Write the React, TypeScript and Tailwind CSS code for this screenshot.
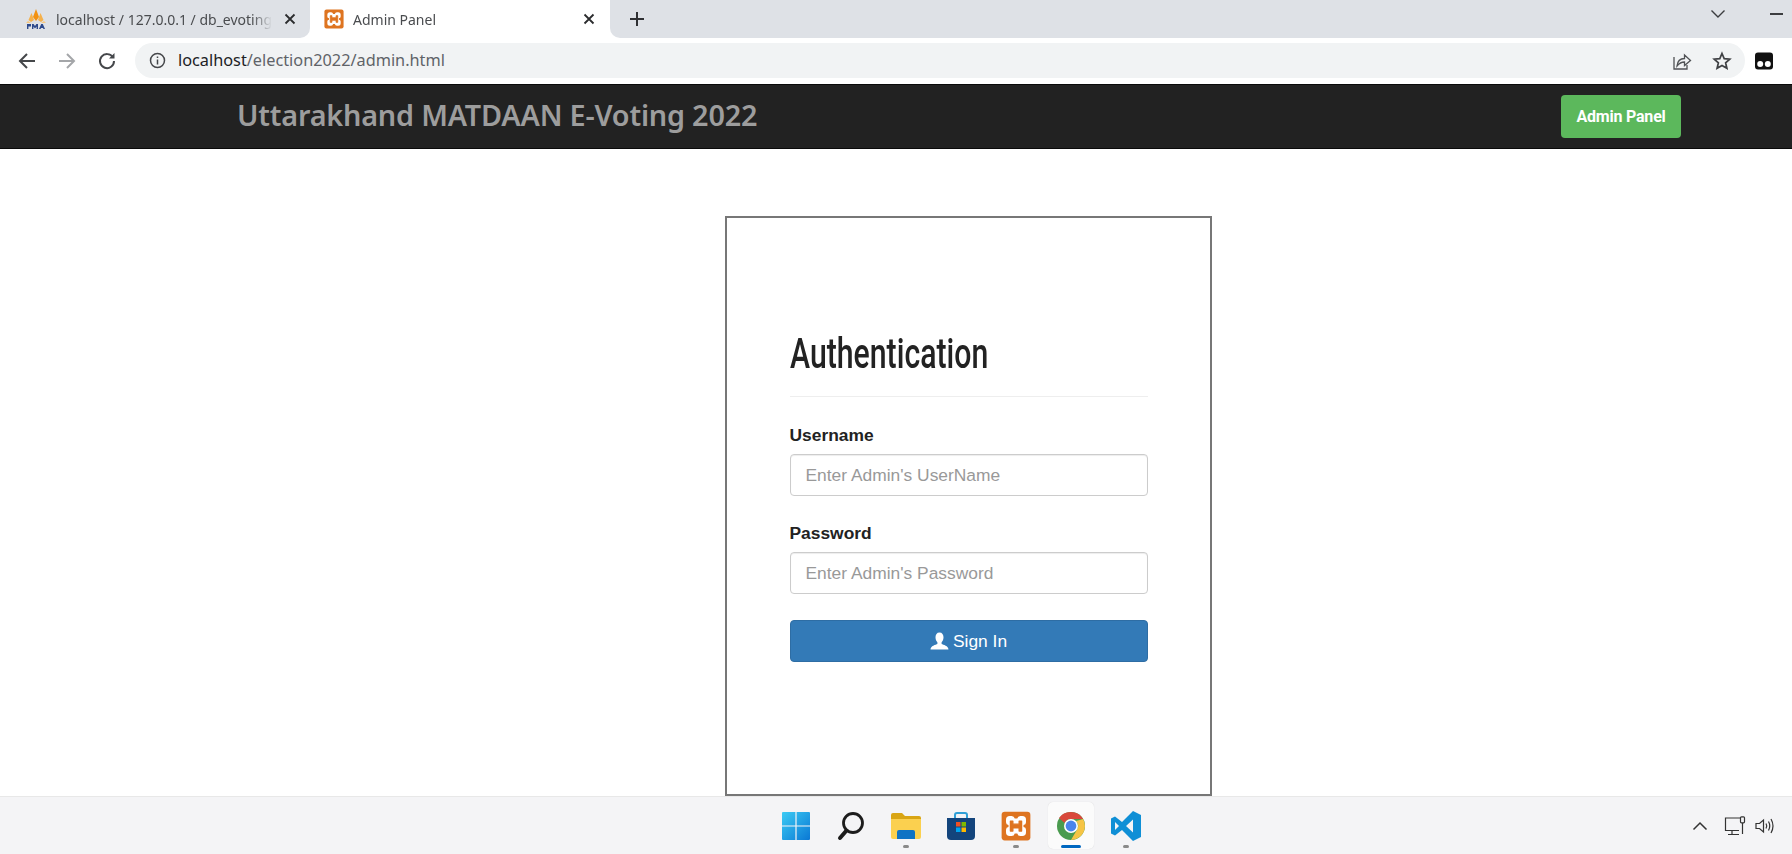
import React from "react";

const ui = "font-['Noto_Sans','Open_Sans',sans-serif]";

function Xampp({ size = 20 }: { size?: number }) {
  return (
    <svg width={size} height={size} viewBox="0 0 24 24">
      <rect x="0.5" y="0.5" width="23" height="23" rx="2.5" fill="#de7420" />
      <path d="M4 7 Q4 4 7 4 H8.5 Q10.5 4 11 6 H13 Q13.5 4 15.5 4 H17 Q20 4 20 7 V9 Q20 11 18 11.2 V12.8 Q20 13 20 15 V17 Q20 20 17 20 H15.5 Q13.5 20 13 18 H11 Q10.5 20 8.5 20 H7 Q4 20 4 17 V15 Q4 13 6 12.8 V11.2 Q4 11 4 9 Z" fill="#fff" />
      <path d="M7.5 8 H9.5 V10.5 H14.5 V8 H16.5 V16 H14.5 V13.5 H9.5 V16 H7.5 Z" fill="#de7420" stroke="#de7420" strokeWidth="1" strokeLinejoin="round" />
    </svg>
  );
}

function Pma() {
  return (
    <svg width="22" height="22" viewBox="0 0 22 22">
      <path d="M11 1 L14 9 L11 13 L8 9 Z" fill="#f29111" />
      <path d="M6.5 5 L9 12 L6 14 L3.5 12 Z" fill="#f5b14c" />
      <path d="M15.5 5 L18.5 12 L16 14 L13 12 Z" fill="#f5b14c" />
      <path d="M3 13 L1 15 H6 Z M19 13 L21 15 H16 Z" fill="#f7c77e" />
      <path d="M2 16 H6 V18.6 H3.4 V21 H2 Z M7 16 H8.6 L10 18 L11.4 16 H13 V21 H11.6 V18.6 L10 20.6 L8.4 18.6 V21 H7 Z M14 21 L16.2 16 H17.8 L20 21 H18.4 L18 20 H16 L15.6 21 Z" fill="#2e4a8c" />
    </svg>
  );
}

function Tab({ active, icon, title, className }: { active?: boolean; icon: React.ReactNode; title: string; className: string }) {
  return (
    <div className={`flex h-[38px] items-center ${className}`}>
      {icon}
      <span className="ml-[9px] min-w-0 flex-1 overflow-hidden whitespace-nowrap text-[14px] text-[#4a4c4f] [mask-image:linear-gradient(to_left,transparent,black_20px)]">{title}</span>
      <svg width="12" height="12" viewBox="0 0 12 12" className={`shrink-0 ${active ? "mx-[15px]" : "ml-[12px] mr-[14px]"}`} stroke="#2b2c2e" strokeWidth="1.8">
        <path d="M1.5 1.5 L10.5 10.5 M10.5 1.5 L1.5 10.5" />
      </svg>
    </div>
  );
}

function TabStrip() {
  return (
    <div className={`flex h-[38px] bg-white ${ui}`}>
      <Tab icon={<Pma />} title="localhost / 127.0.0.1 / db_evoting" className="w-[310px] rounded-br-[10px] bg-[#dee1e6] pl-[25px]" />
      <Tab active icon={<Xampp />} title="Admin Panel" className="w-[300px] rounded-t-[10px] bg-white pl-[14px]" />
      <div className="flex flex-1 items-center rounded-bl-[10px] bg-[#dee1e6] pl-[19px]">
        <svg width="16" height="16" viewBox="0 0 16 16" stroke="#2f3033" strokeWidth="2">
          <path d="M8 1 V15 M1 8 H15" />
        </svg>
        <svg width="16" height="10" viewBox="0 0 16 10" fill="none" stroke="#3c3d40" strokeWidth="1.4" className="mb-[10px] ml-auto">
          <path d="M1.5 1.5 L8 8 L14.5 1.5" />
        </svg>
        <div className="mb-[10px] ml-[44px] mr-[9px] h-[1.5px] w-[13px] bg-[#3c3d40]" />
      </div>
    </div>
  );
}

function Toolbar() {
  return (
    <div className={`flex h-[46px] items-center bg-white pb-[1px] ${ui}`}>
      <div className="flex w-[135px] items-center gap-[20px] pl-[17px]">
        <svg width="20" height="20" viewBox="0 0 20 20" fill="none" stroke="#45474a" strokeWidth="2">
          <path d="M18 10 H3 M10 3 L3 10 L10 17" />
        </svg>
        <svg width="20" height="20" viewBox="0 0 20 20" fill="none" stroke="#a4a6a9" strokeWidth="2">
          <path d="M2 10 H17 M10 3 L17 10 L10 17" />
        </svg>
        <svg width="20" height="20" viewBox="0 0 20 20" fill="none" stroke="#45474a" strokeWidth="2">
          <path d="M16 6.5 A7 7 0 1 0 17 10" />
          <path d="M17.5 2 V7.5 H12" fill="#45474a" stroke="none" />
        </svg>
      </div>
      <div className="flex h-[35px] w-[1610px] items-center rounded-full bg-[#f1f3f4] pl-[14px] pr-[13px]">
        <svg width="17" height="17" viewBox="0 0 17 17" fill="none" stroke="#45474a" strokeWidth="1.5">
          <circle cx="8.5" cy="8.5" r="7" />
          <path d="M8.5 7.5 V12.5 M8.5 4.5 V6" />
        </svg>
        <span className="pl-[12px] text-[16.3px] text-[#5f6368]">
          <span className="text-[#202124]">localhost</span>/election2022/admin.html
        </span>
        <svg width="20" height="20" viewBox="0 0 20 20" fill="none" stroke="#505255" strokeWidth="1.3" className="ml-auto">
          <path d="M2 6 V18 H15 V14" />
          <path d="M5 15 C5.5 10 8.5 7.5 12.5 7.5 V4 L18.5 9.5 L12.5 14.5 V11 C9.5 11 7 12.5 5 15 Z" />
        </svg>
        <svg width="20" height="20" viewBox="0 0 20 20" fill="none" stroke="#3f4144" strokeWidth="1.7" className="ml-[20px]">
          <path d="M10 2.5 L12.2 7.6 L17.8 8.1 L13.6 11.8 L14.9 17.3 L10 14.4 L5.1 17.3 L6.4 11.8 L2.2 8.1 L7.8 7.6 Z" />
        </svg>
      </div>
      <svg width="18" height="18" viewBox="0 0 18 18" className="ml-[10px]">
        <rect width="18" height="17" y="0.5" rx="3" fill="#111" />
        <circle cx="5.2" cy="12" r="3" fill="#fff" />
        <circle cx="12.8" cy="12" r="3" fill="#fff" />
      </svg>
    </div>
  );
}

function Navbar() {
  return (
    <div className="flex h-[65px] shrink-0 items-center border-y border-[#0a0a0a] bg-[#222222] pl-[237px]">
      <span className="mb-[4px] font-['Noto_Sans',sans-serif] text-[28.8px] font-semibold tracking-[-0.2px] text-[#9d9d9d]">Uttarakhand MATDAAN E-Voting 2022</span>
      <div className="ml-auto mr-[111px] flex h-[43px] w-[120px] items-center justify-center rounded-[4px] bg-[#5cb85c] font-['Roboto',sans-serif] text-[16px] font-bold tracking-[-0.2px] text-white">
        Admin Panel
      </div>
    </div>
  );
}

function Field({ label, placeholder, type }: { label: string; placeholder: string; type: string }) {
  return (
    <div className="mb-[26px]">
      <label className="mb-[7px] block text-[17.4px] font-bold leading-[23px] text-[#222]">{label}</label>
      <input
        type={type}
        placeholder={placeholder}
        className="block h-[42px] w-[358px] rounded-[4px] border border-[#ccc] bg-white px-[15px] text-[17.4px] shadow-[inset_0_1px_1px_rgba(0,0,0,0.075)] outline-none placeholder:text-[#999]"
      />
    </div>
  );
}

function Card() {
  return (
    <div className="h-[580px] w-[487px] border-2 border-[#777] bg-white pl-[63px] pt-[111px] font-['Liberation_Sans',Arial,sans-serif]">
      <div className="w-[358px]">
        <h1 className="border-b border-[#eee] pb-[17px] font-['Roboto',sans-serif] text-[42px] font-medium leading-[50px] text-[#222]">
          <span className="inline-block origin-left scale-x-[0.72]">Authentication</span>
        </h1>
        <div className="h-[27px]" />
        <Field label="Username" placeholder="Enter Admin's UserName" type="text" />
        <Field label="Password" placeholder="Enter Admin's Password" type="password" />
        <button className="flex h-[42px] w-[358px] items-center justify-center gap-[4px] rounded-[4px] border border-[#2e6da4] bg-[#337ab7] text-[17.4px] text-white">
          <svg width="19" height="19" viewBox="0 0 18 18" fill="#fff">
            <path d="M9 0.5 C11.5 0.5 12.8 2.5 12.8 5 C12.8 7 12 8.8 11 9.8 V11.3 C12.5 12 17.5 13 17.5 16.5 H0.5 C0.5 13 5.5 12 7 11.3 V9.8 C6 8.8 5.2 7 5.2 5 C5.2 2.5 6.5 0.5 9 0.5 Z" />
          </svg>
          Sign In
        </button>
      </div>
    </div>
  );
}

function TaskIcon({ children, dot, active }: { children: React.ReactNode; dot?: boolean; active?: boolean }) {
  return (
    <div className={`relative flex h-[47px] w-[46px] items-center justify-center rounded-[5px] ${active ? "bg-[#fbfbfb] shadow-[0_0_1px_rgba(0,0,0,0.15)]" : ""}`}>
      {children}
      {dot && <div className="absolute bottom-[1px] h-[3px] w-[6px] rounded-full bg-[#8a8a8a]" />}
      {active && <div className="absolute bottom-[1px] h-[3px] w-[20px] rounded-full bg-[#0067c0]" />}
    </div>
  );
}

function Taskbar() {
  return (
    <div className="relative flex h-[58px] shrink-0 items-center justify-center gap-[9px] border-t border-[#e8e8e8] bg-[#f4f4f6] pl-[132px] pr-[2px]">
      <TaskIcon>
        <svg width="30" height="30" viewBox="0 0 30 30">
          <defs>
            <linearGradient id="w" x1="0" y1="0" x2="1" y2="1">
              <stop offset="0" stopColor="#3ccbf4" />
              <stop offset="1" stopColor="#0a78d4" />
            </linearGradient>
          </defs>
          <path d="M1 2 Q1 1 2 1 H14.4 V14.4 H1 Z M15.6 1 H28 Q29 1 29 2 V14.4 H15.6 Z M1 15.6 H14.4 V29 H2 Q1 29 1 28 Z M15.6 15.6 H29 V28 Q29 29 28 29 H15.6 Z" fill="url(#w)" />
        </svg>
      </TaskIcon>
      <TaskIcon>
        <svg width="28" height="30" viewBox="0 0 28 30" fill="none" stroke="#1c1c1c">
          <circle cx="16" cy="12" r="9.5" strokeWidth="2.8" />
          <path d="M9.5 19.5 L3 27" strokeWidth="4" strokeLinecap="round" />
        </svg>
      </TaskIcon>
      <TaskIcon dot>
        <svg width="32" height="28" viewBox="0 0 32 28">
          <path d="M1 3 Q1 1 3 1 H12 L15 4 H29 Q31 4 31 6 V10 H1 Z" fill="#d9a514" />
          <path d="M1 7 H31 V25 Q31 27 29 27 H3 Q1 27 1 25 Z" fill="#fbd04f" />
          <path d="M7 27 V20 Q7 18 9 18 H23 Q25 18 25 20 V27 Z" fill="#0f73c4" />
        </svg>
      </TaskIcon>
      <TaskIcon>
        <svg width="30" height="30" viewBox="0 0 30 30">
          <path d="M9 7 V4 Q9 2 11 2 H19 Q21 2 21 4 V7" fill="none" stroke="#2f9fd6" strokeWidth="2" />
          <path d="M1 7 H29 V25 Q29 29 25 29 H5 Q1 29 1 25 Z" fill="#13447c" />
          <rect x="10" y="11" width="4.5" height="4.5" fill="#f25022" />
          <rect x="15.5" y="11" width="4.5" height="4.5" fill="#7fba00" />
          <rect x="10" y="16.5" width="4.5" height="4.5" fill="#00a4ef" />
          <rect x="15.5" y="16.5" width="4.5" height="4.5" fill="#ffb900" />
        </svg>
      </TaskIcon>
      <TaskIcon dot>
        <Xampp size={30} />
      </TaskIcon>
      <TaskIcon active>
        <svg width="30" height="30" viewBox="0 0 30 30">
          <circle cx="15" cy="15" r="14" fill="#4a9b4f" />
          <path d="M15 1 A14 14 0 0 1 27.1 8 H15 A7 7 0 0 0 8.6 12 L3 7 A14 14 0 0 1 15 1 Z" fill="#d9483b" />
          <path d="M27.1 8 A14 14 0 0 1 15 29 L21.1 18.5 A7 7 0 0 0 20 10 Z" fill="#f6c445" />
          <circle cx="15" cy="15" r="7" fill="#fff" />
          <circle cx="15" cy="15" r="5.4" fill="#4a84ec" />
        </svg>
      </TaskIcon>
      <TaskIcon dot>
        <svg width="32" height="32" viewBox="0 0 32 32">
          <path d="M23 1 L31 5 V27 L23 31 L12 20 L5 25.5 L1 23.5 V8.5 L5 6.5 L12 12 Z M23 9.5 L16 16 L23 22.5 Z M5 12 V20 L9 16 Z" fill="#0f8fd6" fillRule="evenodd" />
        </svg>
      </TaskIcon>
      <div className="absolute right-[16px] top-0 flex h-full items-center gap-[9px]">
        <svg width="16" height="10" viewBox="0 0 16 10" fill="none" stroke="#333" strokeWidth="1.5" className="mr-[7px]">
          <path d="M1.5 8.5 L8 2 L14.5 8.5" />
        </svg>
        <svg width="22" height="20" viewBox="0 0 22 20" fill="none" stroke="#333" strokeWidth="1.2">
          <path d="M16 2 H1.5 V14.5 H15 M8 14.5 V18 M4 18.5 H15" />
          <rect x="16.5" y="0.8" width="4" height="6" rx="1" />
          <path d="M18.5 7 V18" />
        </svg>
        <svg width="21" height="18" viewBox="0 0 21 18" fill="none" stroke="#333" strokeWidth="1.2">
          <path d="M1 6.5 H4.5 L8.5 3 V15 L4.5 11.5 H1 Z" />
          <path d="M11 6.5 Q12.5 9 11 11.5 M13.5 4.5 Q16 9 13.5 13.5 M16 2 Q20 9 16 16" />
        </svg>
      </div>
    </div>
  );
}

export default function App() {
  return (
    <div className="flex h-[854px] flex-col overflow-hidden bg-white">
      <TabStrip />
      <Toolbar />
      <Navbar />
      <main className="flex min-h-0 flex-1 justify-center pl-[144px] pt-[67px]">
        <Card />
      </main>
      <Taskbar />
    </div>
  );
}
